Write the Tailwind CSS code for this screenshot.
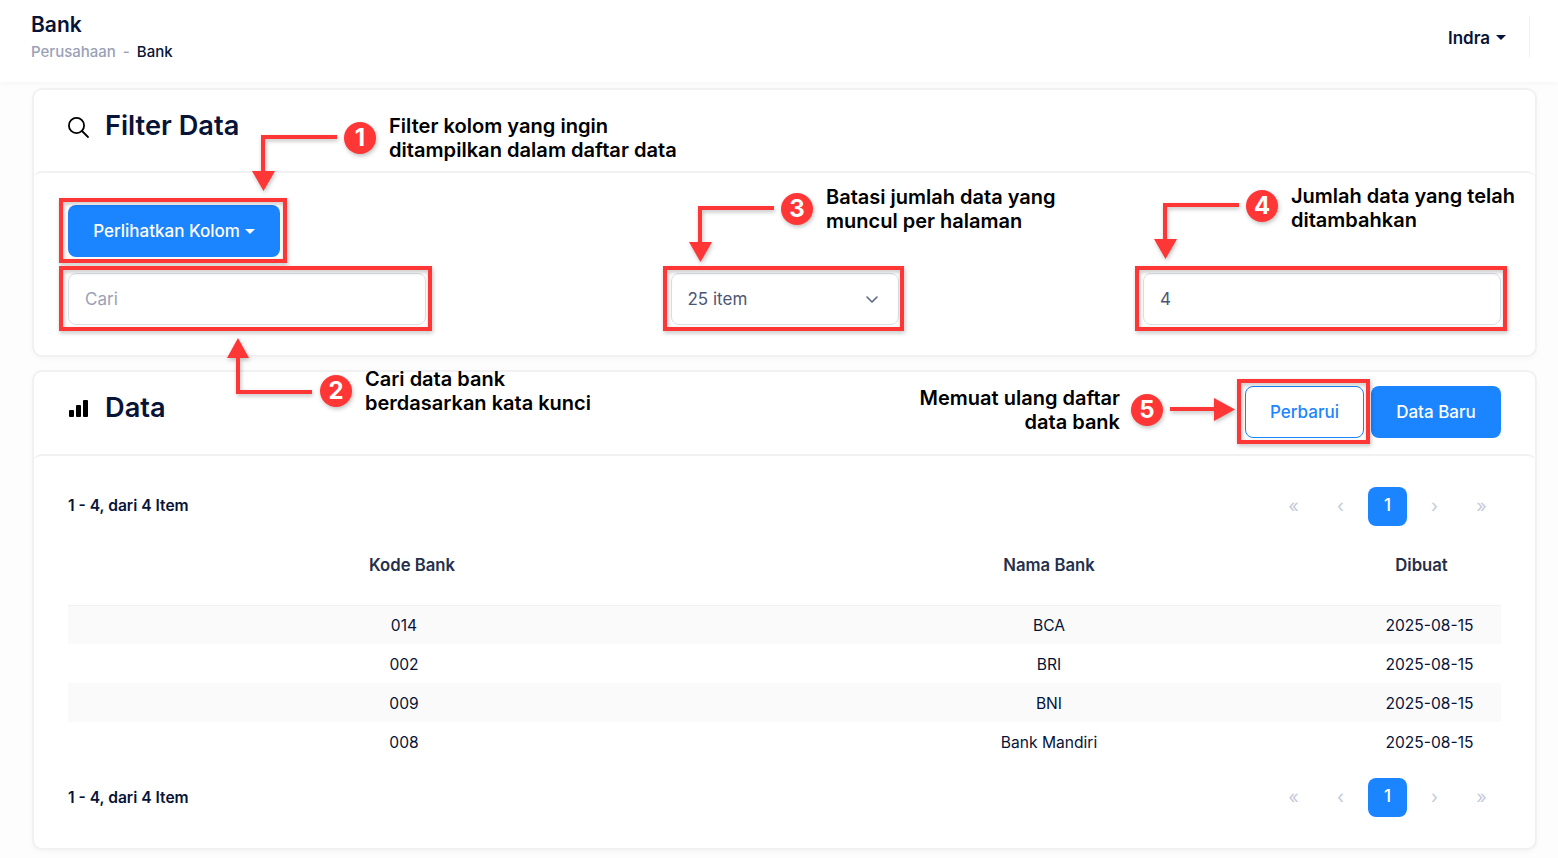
<!DOCTYPE html>
<html lang="id">
<head>
<meta charset="utf-8">
<title>Bank</title>
<script src="https://cdn.jsdelivr.net/npm/@tailwindcss/browser@4"></script>
</head>
<body class="relative w-[1558px] h-[858px] overflow-hidden bg-[#fdfdfd] font-['Inter',sans-serif] text-[#071437]">

  <!-- Header -->
  <header class="h-[82px] bg-white shadow-[0_2px_6px_rgba(0,0,0,0.03)] pl-[31px] pr-[28px] flex items-center justify-between">
    <div class="-mt-[10px]">
      <h1 class="text-[21px] leading-[28px] font-semibold">Bank</h1>
      <div class="flex items-center text-[15px] leading-[20px] font-medium mt-[3px]">
        <span class="text-[#99a1b7]">Perusahaan</span>
        <span class="text-[#99a1b7] mx-[7px]">-</span>
        <span>Bank</span>
      </div>
    </div>
    <div class="flex items-center h-[42px] -mt-[8px]">
      <button class="flex items-center text-[17px] font-semibold mr-[23px] pt-[4px]">
        Indra
        <span class="ml-[6px] -mt-[4px] border-x-[5px] border-t-[5px] border-x-transparent border-t-[#071437]"></span>
      </button>
      <div class="w-px h-[42px] bg-[#f1f1f4]"></div>
    </div>
  </header>

  <main class="w-[1505px] ml-[32px] mt-[6px] flex flex-col gap-[13px]">
    <!-- Filter Data -->
    <section class="h-[269px] bg-white border-2 border-[#f1f1f4] rounded-[10px] shadow-[0_2px_4px_rgba(0,0,0,0.03)]">
      <div class="h-[82px] flex items-center pl-[34px] -mt-px">
        <svg class="w-[24px] h-[24px] -mt-[6px] -ml-[2px]" viewBox="0 0 24 24" fill="none" stroke="#000" stroke-width="1.8">
          <circle cx="10.5" cy="10.5" r="7.6"></circle>
          <path d="M16 16l6 6" stroke-linecap="round"></path>
        </svg>
        <h2 class="ml-[15px] text-[27.2px] leading-[34px] font-semibold -mt-[9px]">Filter Data</h2>
      </div>
      <div class="h-[185px] -mx-[2px] border-t-2 border-[#f1f1f4] rounded-t-[10px] px-[36px] pt-[32px]">
        <button class="flex items-center justify-center w-[212px] h-[52px] pt-[2px] bg-[#1b84ff] rounded-[8px] text-white text-[17px] font-medium">
          Perlihatkan Kolom
          <span class="ml-[5px] -mt-[2px] border-x-[5px] border-t-[5px] border-x-transparent border-t-white"></span>
        </button>
        <div class="flex justify-between mt-[16px]">
          <div class="w-[358px] h-[52px] pt-[2px] border border-[#dbdfe9] rounded-[8px] px-[16px] flex items-center text-[17px] text-[#99a1b7]">Cari</div>
          <div class="w-[228px] h-[52px] pt-[2px] border border-[#dbdfe9] rounded-[8px] pl-[16px] pr-[19px] flex items-center justify-between text-[17px] text-[#4b5675]">
            25 item
            <svg class="w-[14px] h-[9px] -mt-[2px]" viewBox="0 0 14 9" fill="none" stroke="#5d6682" stroke-width="1.6" stroke-linecap="round" stroke-linejoin="round"><path d="M2 2l5 5 5-5"></path></svg>
          </div>
          <div class="w-[358px] h-[52px] pt-[2px] border border-[#dbdfe9] rounded-[8px] px-[16px] flex items-center text-[17px] text-[#4b5675]">4</div>
        </div>
      </div>
    </section>

    <!-- Data -->
    <section class="h-[480px] bg-white border-2 border-[#f1f1f4] rounded-[10px] shadow-[0_2px_4px_rgba(0,0,0,0.03)]">
      <div class="h-[82px] flex items-center justify-between px-[34px]">
        <div class="flex items-center -mt-[10px]">
          <svg class="w-[21px] h-[18px] mt-[1px]" viewBox="0 0 21 18" fill="#000">
            <rect x="1" y="10" width="5" height="7" rx="1"></rect>
            <rect x="8" y="5" width="5" height="12" rx="1"></rect>
            <rect x="15" y="0" width="5" height="17" rx="1"></rect>
          </svg>
          <h2 class="ml-[16px] text-[27.2px] leading-[34px] font-semibold">Data</h2>
        </div>
        <div class="flex items-center gap-[7px] -mt-[2px]">
          <button class="w-[119px] h-[52px] pt-[2px] border border-[#1b84ff] rounded-[8px] bg-white text-[#1b84ff] text-[17px] font-medium">Perbarui</button>
          <button class="w-[130px] h-[52px] pt-[2px] bg-[#1b84ff] rounded-[8px] text-white text-[17px] font-medium">Data Baru</button>
        </div>
      </div>
      <div class="h-[394px] -mx-[2px] border-t-2 border-[#f1f1f4] rounded-t-[10px] px-[36px] pt-[30px]">
        <div class="flex items-center justify-between h-[40px]">
          <span class="text-[15.6px] font-semibold -mt-px">1 - 4, dari 4 Item</span>
          <div class="flex gap-[8px] text-[18px] text-[#c4cada]">
            <span class="w-[39px] h-[39px] pb-[2px] flex items-center justify-center">«</span>
            <span class="w-[39px] h-[39px] pb-[2px] flex items-center justify-center">‹</span>
            <span class="w-[39px] h-[39px] pb-px flex items-center justify-center bg-[#1b84ff] rounded-[8px] text-[17px] text-white font-medium">1</span>
            <span class="w-[39px] h-[39px] pb-[2px] flex items-center justify-center">›</span>
            <span class="w-[39px] h-[39px] pb-[2px] flex items-center justify-center">»</span>
          </div>
        </div>
        <table class="w-[1433px] table-fixed mt-[19px] text-[15.6px]">
          <colgroup>
            <col class="w-[672px]">
            <col class="w-[618px]">
            <col class="w-[143px]">
          </colgroup>
          <thead>
            <tr class="h-[60px] border-b border-[#f1f1f4] text-[16.7px] text-[#252f4a]">
              <th class="font-semibold pl-[16px] pb-[18px]">Kode Bank</th>
              <th class="font-semibold pb-[18px]">Nama Bank</th>
              <th class="font-semibold pr-[16px] pb-[18px]">Dibuat</th>
            </tr>
          </thead>
          <tbody class="text-center [&_td]:pt-[2px]">
            <tr class="h-[39px] bg-[#fafafa]"><td>014</td><td>BCA</td><td>2025-08-15</td></tr>
            <tr class="h-[39px]"><td>002</td><td>BRI</td><td>2025-08-15</td></tr>
            <tr class="h-[39px] bg-[#fafafa]"><td>009</td><td>BNI</td><td>2025-08-15</td></tr>
            <tr class="h-[39px]"><td>008</td><td>Bank Mandiri</td><td>2025-08-15</td></tr>
          </tbody>
        </table>
        <div class="flex items-center justify-between h-[40px] mt-[16px]">
          <span class="text-[15.6px] font-semibold pt-px">1 - 4, dari 4 Item</span>
          <div class="flex gap-[8px] text-[18px] text-[#c4cada]">
            <span class="w-[39px] h-[39px] pb-[2px] flex items-center justify-center">«</span>
            <span class="w-[39px] h-[39px] pb-[2px] flex items-center justify-center">‹</span>
            <span class="w-[39px] h-[39px] pb-px flex items-center justify-center bg-[#1b84ff] rounded-[8px] text-[17px] text-white font-medium">1</span>
            <span class="w-[39px] h-[39px] pb-[2px] flex items-center justify-center">›</span>
            <span class="w-[39px] h-[39px] pb-[2px] flex items-center justify-center">»</span>
          </div>
        </div>
      </div>
    </section>
  </main>

  <!-- Annotations drawn over the screenshot -->
  <svg class="absolute inset-0 w-[1558px] h-[858px] pointer-events-none drop-shadow-[1px_2px_2px_rgba(0,0,0,0.25)]" viewBox="0 0 1558 858" fill="none">
    <g stroke="#ff3636" stroke-width="4">
      <rect x="61" y="200" width="224" height="61"></rect>
      <rect x="61" y="268" width="369" height="61"></rect>
      <rect x="665" y="268" width="237" height="61"></rect>
      <rect x="1137" y="268" width="368" height="61"></rect>
      <rect x="1239" y="381" width="129" height="61"></rect>
      <path d="M337 137H263V173"></path>
      <path d="M312 392H238V356"></path>
      <path d="M774 208H700V243"></path>
      <path d="M1239 205H1165V240"></path>
      <path d="M1170 409H1215"></path>
    </g>
    <g fill="#ff3636">
      <path d="M252 171H275L263.500 191Z"></path>
      <path d="M227 358H249L238 338Z"></path>
      <path d="M689 242H712L700.500 262Z"></path>
      <path d="M1154 239H1177L1165.500 259Z"></path>
      <path d="M1214 398V421L1235 409.500Z"></path>
      <circle cx="360" cy="138" r="16"></circle>
      <circle cx="336" cy="391" r="16"></circle>
      <circle cx="797" cy="209" r="16"></circle>
      <circle cx="1262" cy="206" r="16"></circle>
      <circle cx="1147" cy="410" r="16"></circle>
    </g>
  </svg>
  <div class="absolute left-[344px] top-[122px] w-[32px] h-[32px] flex items-center justify-center text-white text-[24px] font-bold">1</div>
  <div class="absolute left-[320px] top-[375px] w-[32px] h-[32px] flex items-center justify-center text-white text-[24px] font-bold">2</div>
  <div class="absolute left-[781px] top-[193px] w-[32px] h-[32px] flex items-center justify-center text-white text-[24px] font-bold">3</div>
  <div class="absolute left-[1246px] top-[190px] w-[32px] h-[32px] flex items-center justify-center text-white text-[24px] font-bold">4</div>
  <div class="absolute left-[1131px] top-[394px] w-[32px] h-[32px] flex items-center justify-center text-white text-[24px] font-bold">5</div>

  <p class="absolute left-[389px] top-[114px] text-[20.1px] leading-[24px] font-semibold text-black whitespace-nowrap">Filter kolom yang ingin<br>ditampilkan dalam daftar data</p>
  <p class="absolute left-[365px] top-[367px] text-[20px] leading-[24px] font-semibold text-black whitespace-nowrap">Cari data bank<br>berdasarkan kata kunci</p>
  <p class="absolute left-[826px] top-[185px] text-[20px] leading-[24px] font-semibold text-black whitespace-nowrap">Batasi jumlah data yang<br>muncul per halaman</p>
  <p class="absolute left-[1291px] top-[184px] text-[20px] leading-[24px] font-semibold text-black whitespace-nowrap">Jumlah data yang telah<br>ditambahkan</p>
  <p class="absolute right-[438px] top-[386px] text-[20px] leading-[24px] font-semibold text-black text-right whitespace-nowrap">Memuat ulang daftar<br>data bank</p>

</body>
</html>
